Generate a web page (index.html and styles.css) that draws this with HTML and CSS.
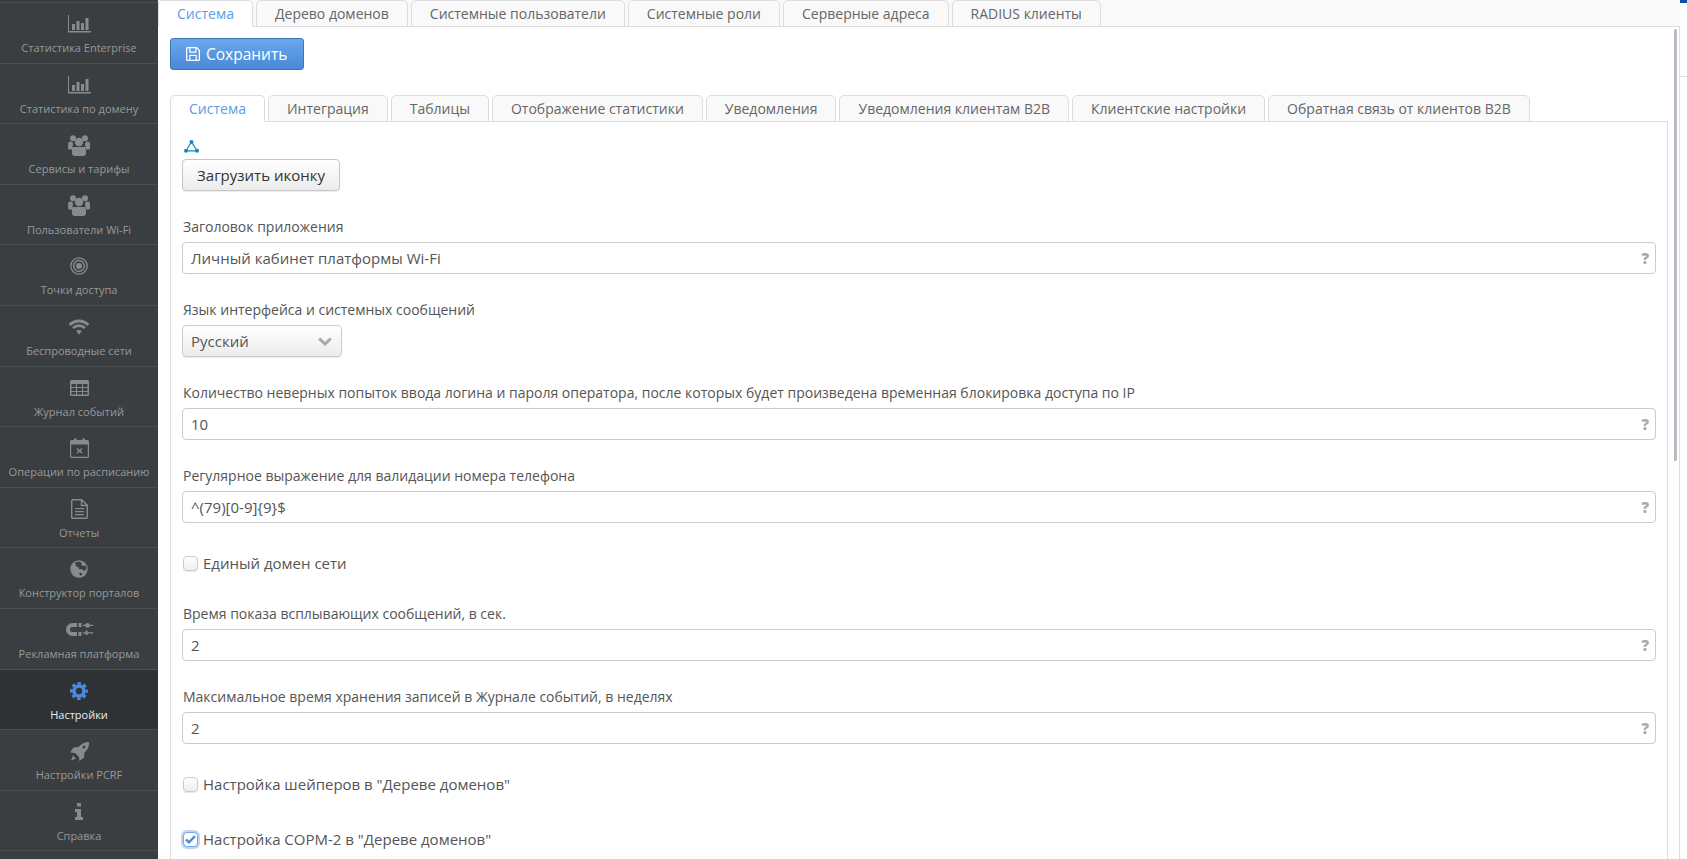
FILE: index.html
```html
<!DOCTYPE html>
<html lang="ru">
<head>
<meta charset="utf-8">
<title>Настройки</title>
<link rel="stylesheet" href="styles.css">
</head>
<body>
<div class="app">
  <nav class="sidebar">
    <div class="nav-top"></div>
    <a class="nav-item"><span class="nav-icon"><svg width="23" height="18" viewBox="0 0 23 18"><path class="ic" d="M0 0h1v16h22v1.500H0zM4 9h3v6H4zM8.500 6h3v9h-3zM13 8h3v7h-3zM17.500 3h3v12h-3z"/></svg></span><span class="nav-label">Статистика Enterprise</span></a>
    <a class="nav-item"><span class="nav-icon"><svg width="23" height="18" viewBox="0 0 23 18"><path class="ic" d="M0 0h1v16h22v1.500H0zM4 9h3v6H4zM8.500 6h3v9h-3zM13 8h3v7h-3zM17.500 3h3v12h-3z"/></svg></span><span class="nav-label">Статистика по домену</span></a>
    <a class="nav-item"><span class="nav-icon"><svg width="22" height="21" viewBox="0 0 22 21"><g class="ic"><circle cx="5" cy="3.200" r="3"/><circle cx="17" cy="3.200" r="3"/><circle cx="11" cy="7" r="4.200"/><circle cx="2.500" cy="9" r="2.500"/><circle cx="19.500" cy="9" r="2.500"/><path d="M0 10.500h4.500v4H1.500A1.500 1.500 0 0 1 0 13zM22 10.500h-4.500v4h3a1.500 1.500 0 0 0 1.500-1.500zM5.500 12h11a1.500 1.500 0 0 1 1.500 1.500V18a3 3 0 0 1-3 3H7a3 3 0 0 1-3-3v-4.500A1.500 1.500 0 0 1 5.500 12z"/></g></svg></span><span class="nav-label">Сервисы и тарифы</span></a>
    <a class="nav-item"><span class="nav-icon"><svg width="22" height="21" viewBox="0 0 22 21"><g class="ic"><circle cx="5" cy="3.200" r="3"/><circle cx="17" cy="3.200" r="3"/><circle cx="11" cy="7" r="4.200"/><circle cx="2.500" cy="9" r="2.500"/><circle cx="19.500" cy="9" r="2.500"/><path d="M0 10.500h4.500v4H1.500A1.500 1.500 0 0 1 0 13zM22 10.500h-4.500v4h3a1.500 1.500 0 0 0 1.500-1.500zM5.500 12h11a1.500 1.500 0 0 1 1.500 1.500V18a3 3 0 0 1-3 3H7a3 3 0 0 1-3-3v-4.500A1.500 1.500 0 0 1 5.500 12z"/></g></svg></span><span class="nav-label">Пользователи Wi-Fi</span></a>
    <a class="nav-item"><span class="nav-icon"><svg width="18" height="18" viewBox="0 0 18 18"><g class="ics" fill="none"><circle cx="9" cy="9" r="8.200" stroke-width="1.300"/><circle cx="9" cy="9" r="5.400" stroke-width="1.500"/></g><circle class="ic" cx="9" cy="9" r="3"/></svg></span><span class="nav-label">Точки доступа</span></a>
    <a class="nav-item"><span class="nav-icon"><svg width="22" height="16" viewBox="0 0 22 16"><g class="ics" fill="none"><path stroke-width="3" d="M1.700 6.100A12.500 12.500 0 0 1 20.300 6.100"/><path stroke-width="2.800" d="M5.100 9.150A8 8 0 0 1 16.900 9.150"/></g><path class="ic" d="M11 15.800L8 11.800Q11 10 14 11.800z"/></svg></span><span class="nav-label">Беспроводные сети</span></a>
    <a class="nav-item"><span class="nav-icon"><svg width="19" height="16" viewBox="0 0 19 16"><path class="ic" fill-rule="evenodd" d="M1.500 0h16A1.500 1.500 0 0 1 19 1.500v13a1.500 1.500 0 0 1-1.500 1.500h-16A1.500 1.500 0 0 1 0 14.500v-13A1.500 1.500 0 0 1 1.500 0zM1.500 4v3h4.500V4zM7 4v3h5V4zM13 4v3h4.500V4zM1.500 8v3h4.500V8zM7 8v3h5V8zM13 8v3h4.500V8zM1.500 12v2.500h4.500V12zM7 12v2.500h5V12zM13 12v2.500h4.500V12z"/></svg></span><span class="nav-label">Журнал событий</span></a>
    <a class="nav-item"><span class="nav-icon"><svg width="19" height="20" viewBox="0 0 19 20"><path class="ic" fill-rule="evenodd" d="M1.500 2H4V.5h2.500V2h6V.5H15V2h2.500A1.500 1.500 0 0 1 19 3.500v15a1.500 1.500 0 0 1-1.500 1.500h-16A1.500 1.500 0 0 1 0 18.500v-15A1.500 1.500 0 0 1 1.500 2zM1.200 6.500v12a.3.3 0 0 0 .3.3h16a.3.3 0 0 0 .3-.3v-12z"/><path class="ics" fill="none" stroke-width="1.500" d="M7 10.500l5 4.500M12 10.500l-5 4.500"/></svg></span><span class="nav-label">Операции по расписанию</span></a>
    <a class="nav-item"><span class="nav-icon"><svg width="17" height="20" viewBox="0 0 17 20"><path class="ics" fill="none" stroke-width="1.400" d="M1.700.7h9l5.600 5.600v12a1 1 0 0 1-1 1H1.700a1 1 0 0 1-1-1V1.700a1 1 0 0 1 1-1zM10.500.7v5.800h5.800"/><path class="ic" d="M4 9h9v1.300H4zM4 12h9v1.300H4zM4 15h9v1.300H4z"/></svg></span><span class="nav-label">Отчеты</span></a>
    <a class="nav-item"><span class="nav-icon"><svg width="18" height="18" viewBox="0 0 18 18"><circle class="ic" cx="9" cy="9" r="8.700"/><path class="hole" d="M5 2.500l4-1 3 1.500-1 2 2 1 3-.5.500 3-2 2.500-1.500-1-1.500-1-2 .5-1-2-2-1-1-2.500zM9.500 12.500l2 .5 1 1-2 2-1-1.500z"/></svg></span><span class="nav-label">Конструктор порталов</span></a>
    <a class="nav-item"><span class="nav-icon"><svg width="27" height="14" viewBox="0 0 27 14"><path class="ic" d="M6.500 0h4.500v4H6.500a2.500 2.500 0 0 0 0 5H11v4H6.500a6.500 6.500 0 0 1 0-13zM12.500 0h3v4h-3zM12.500 9h3v4h-3zM21.500 0a2.500 2.500 0 0 1 2.400 1.800H27v1.200h-3.100a2.500 2.500 0 0 1-4.800 0H17V1.800h2.100A2.500 2.500 0 0 1 21.500 0zM19.500 7.500h2v1.700H27v1.200h-5.500V12h-2v-1.600H17V9.200h2.500z"/></svg></span><span class="nav-label">Рекламная платформа</span></a>
    <a class="nav-item nav-active"><span class="nav-icon"><svg width="18" height="18" viewBox="0 0 18 18"><g fill="none" stroke="#4a89dc"><circle cx="9" cy="9" r="7.600" stroke-width="2.800" stroke-dasharray="3.400 2.570" stroke-dashoffset="1.700"/><circle cx="9" cy="9" r="5" stroke-width="3.600"/></g></svg></span><span class="nav-label">Настройки</span></a>
    <a class="nav-item"><span class="nav-icon"><svg width="19" height="19" viewBox="0 0 19 19"><path class="ic" d="M19 0c.3 4.500-1.500 8-4.500 10.500l-.5 5L9.500 19l-.5-4-4-4-5-.5L3.500 5.500l5-.5C11 2 14.500 0 19 0zM3 13.500L6 16.500 1 18.500z"/><circle class="hole" cx="14" cy="5" r="1.500"/></svg></span><span class="nav-label">Настройки PCRF</span></a>
    <a class="nav-item"><span class="nav-icon"><svg width="8" height="17" viewBox="0 0 8 17"><path class="ic" d="M2 0h4v3.500H2zM0 6h6v8h2v3H0v-3h2V9H0z"/></svg></span><span class="nav-label">Справка</span></a>
  </nav>

  <main class="main">
    <div class="tabs tabs-outer">
      <a class="tab tab-active">Система</a>
      <a class="tab">Дерево доменов</a>
      <a class="tab">Системные пользователи</a>
      <a class="tab">Системные роли</a>
      <a class="tab">Серверные адреса</a>
      <a class="tab">RADIUS клиенты</a>
    </div>
    <div class="page">
      <div class="scroll-thumb"></div>
      <button class="btn-save"><svg width="14" height="14" viewBox="0 0 14 14"><path fill="#fff" fill-rule="evenodd" d="M1.500 0H11l3 3v9.500a1.500 1.500 0 0 1-1.500 1.500h-11A1.500 1.500 0 0 1 0 12.500v-11A1.500 1.500 0 0 1 1.500 0zM1.300 1.300v11.400h1.900V8.500a.8.8 0 0 1 .8-.8h6a.8.8 0 0 1 .8.8v4.200h1.900V3.600L10.500 1.300V5a.8.8 0 0 1-.8.8H4a.8.8 0 0 1-.8-.8V1.300zM4.400 1.300v3.300h4.900V1.300zM4.400 8.900v3.800h5.200V8.900z"/></svg>Сохранить</button>
      <div class="tabs tabs-inner">
        <a class="tab tab-active">Система</a>
        <a class="tab">Интеграция</a>
        <a class="tab">Таблицы</a>
        <a class="tab">Отображение статистики</a>
        <a class="tab">Уведомления</a>
        <a class="tab">Уведомления клиентам B2B</a>
        <a class="tab">Клиентские настройки</a>
        <a class="tab">Обратная связь от клиентов B2B</a>
      </div>
      <div class="pane">
        <svg class="logo" width="15" height="13" viewBox="0 0 15 13"><g fill="#0b8dbd"><circle cx="7.500" cy="2" r="2"/><circle cx="2" cy="10.800" r="2"/><circle cx="13" cy="10.800" r="2"/></g><path fill="none" stroke="#0b8dbd" stroke-width="1.200" d="M7.500 2L2 10.800H13z"/></svg>
        <button class="btn-upload">Загрузить иконку</button>

        <div class="field">
          <label class="field-label">Заголовок приложения</label>
          <div class="input-wrap"><input class="input" type="text" value="Личный кабинет платформы Wi-Fi" readonly><span class="hint">?</span></div>
        </div>
        <div class="field">
          <label class="field-label">Язык интерфейса и системных сообщений</label>
          <div class="select">Русский<svg width="14" height="9" viewBox="0 0 14 9"><path fill="none" stroke="#a9a9a9" stroke-width="3" d="M1.200 1.500L7 7l5.800-5.500"/></svg></div>
        </div>
        <div class="field">
          <label class="field-label">Количество неверных попыток ввода логина и пароля оператора, после которых будет произведена временная блокировка доступа по IP</label>
          <div class="input-wrap"><input class="input" type="text" value="10" readonly><span class="hint">?</span></div>
        </div>
        <div class="field">
          <label class="field-label">Регулярное выражение для валидации номера телефона</label>
          <div class="input-wrap"><input class="input" type="text" value="^(79)[0-9]{9}$" readonly><span class="hint">?</span></div>
        </div>
        <div class="check-row"><span class="box"></span>Единый домен сети</div>
        <div class="field">
          <label class="field-label">Время показа всплывающих сообщений, в сек.</label>
          <div class="input-wrap"><input class="input" type="text" value="2" readonly><span class="hint">?</span></div>
        </div>
        <div class="field">
          <label class="field-label">Максимальное время хранения записей в Журнале событий, в неделях</label>
          <div class="input-wrap"><input class="input" type="text" value="2" readonly><span class="hint">?</span></div>
        </div>
        <div class="check-row"><span class="box"></span>Настройка шейперов в "Дереве доменов"</div>
        <div class="check-row"><span class="box box-on"><svg width="11" height="9" viewBox="0 0 11 9"><path fill="none" stroke="#4a89dc" stroke-width="2.400" d="M1 4.500L4 7.300 10 1.200"/></svg></span>Настройка СОРМ-2 в "Дереве доменов"</div>
      </div>
    </div>
  </main>

  <aside class="edge"><div class="edge-mark"></div><div class="edge-line"></div></aside>
</div>
</body>
</html>
```

FILE: styles.css
```css
* { box-sizing: border-box; }
html, body { margin: 0; height: 100%; overflow: hidden; }
body { font-family: "Open Sans", sans-serif; font-size: 14px; color: #555; background: #fff; }

.app { display: flex; height: 859px; overflow: hidden; }

/* sidebar */
.sidebar { width: 158px; flex: none; background: #3a3e41; }
.nav-top { height: 3px; border-bottom: 1px solid #4b4f52; }
.nav-item { display: flex; flex-direction: column; align-items: center; height: 60.6px; padding-top: 10px; border-bottom: 1px solid #4b4f52; }
.nav-icon { display: flex; align-items: center; justify-content: center; height: 22px; }
.nav-label { margin-top: 6px; font-size: 11px; line-height: 14px; color: #96999b; white-space: nowrap; }
.nav-active { background: #2f3235; }
.nav-active .nav-label { color: #e6edf5; }
.ic { fill: #888b8e; }
.ics { stroke: #888b8e; }
.hole { fill: #3a3e41; }

/* main */
.main { flex: 1; min-width: 0; display: flex; flex-direction: column; }
.tabs { display: flex; gap: 3px; border-bottom: 1px solid #ddd; }
.tab { display: block; height: 27px; margin-bottom: -1px; padding: 0 18px; font-size: 14px; line-height: 26px; color: #666; white-space: nowrap; background: #f9f9f9; border: 1px solid #ddd; border-radius: 5px 5px 0 0; }
.tab-active { color: #5a9bea; background: #fff; border-bottom-color: #fff; }
.tabs-outer { height: 27px; background: #f9f9f9; }

.page { position: relative; flex: 1; padding: 11px 11px 0 12px; border-right: 1px solid #ddd; }
.scroll-thumb { position: absolute; top: 2px; right: 2px; width: 3px; height: 432px; background: #b9b9c1; border-radius: 2px; }

.btn-save { display: flex; align-items: center; gap: 6px; width: 134px; height: 32px; padding: 0 0 0 15px; font: 15.5px "Open Sans", sans-serif; color: #fff; background: linear-gradient(#69a8ee, #4a88d6); border: 1px solid #3f76bb; border-radius: 3px; }

.tabs-inner { height: 27px; margin-top: 25px; }

.pane { padding: 18px 11px 0; border: 1px solid #ddd; border-top: 0; height: 740px; }
.logo { display: block; margin-left: 2px; }
.btn-upload { display: block; width: 158px; height: 32px; margin: 6px 0 26px; padding: 0; font: 15px "Open Sans", sans-serif; color: #333; background: linear-gradient(#fff, #ececec); border: 1px solid #c6c6c6; border-radius: 4px; box-shadow: 0 1px 1px rgba(0,0,0,.08); }

.field { margin-bottom: 26px; }
.field-label { display: block; height: 20px; margin-bottom: 5px; padding-left: 1px; font-size: 14px; line-height: 20px; color: #555; white-space: nowrap; }
.input-wrap { position: relative; }
.input { display: block; width: 100%; height: 32px; padding: 0 30px 0 8px; font: 15px "Open Sans", sans-serif; color: #555; background: #fff; border: 1px solid #ccc; border-radius: 4px; outline: 0; }
.hint { position: absolute; top: 6px; right: 7px; font-size: 15px; line-height: 20px; font-weight: 800; color: #aaa; }

.select { display: flex; align-items: center; justify-content: space-between; width: 160px; height: 32px; padding: 0 9px 0 8px; font-size: 15px; color: #555; background: linear-gradient(#fff, #ececec); border: 1px solid #ccc; border-radius: 4px; box-shadow: 0 1px 1px rgba(0,0,0,.08); }

.check-row { display: flex; align-items: center; gap: 5px; height: 28px; margin-bottom: 27px; font-size: 15px; color: #555; }
.box { display: flex; align-items: center; justify-content: center; width: 15px; height: 15px; margin-left: 1px; background: linear-gradient(#fff, #eee); border: 1px solid #ccc; border-radius: 4px; box-shadow: 0 1px 1px rgba(0,0,0,.1); }
.box-on { background: #fff; border-color: #6fa7ea; box-shadow: 0 0 0 2px #bcd6f5; }

/* right edge */
.edge { position: relative; width: 7px; flex: none; background: #fff; }
.edge-mark { height: 3px; background: #0b4fa8; }
.edge-line { height: 1px; margin-top: 73px; background: #e0e0e0; }
```
